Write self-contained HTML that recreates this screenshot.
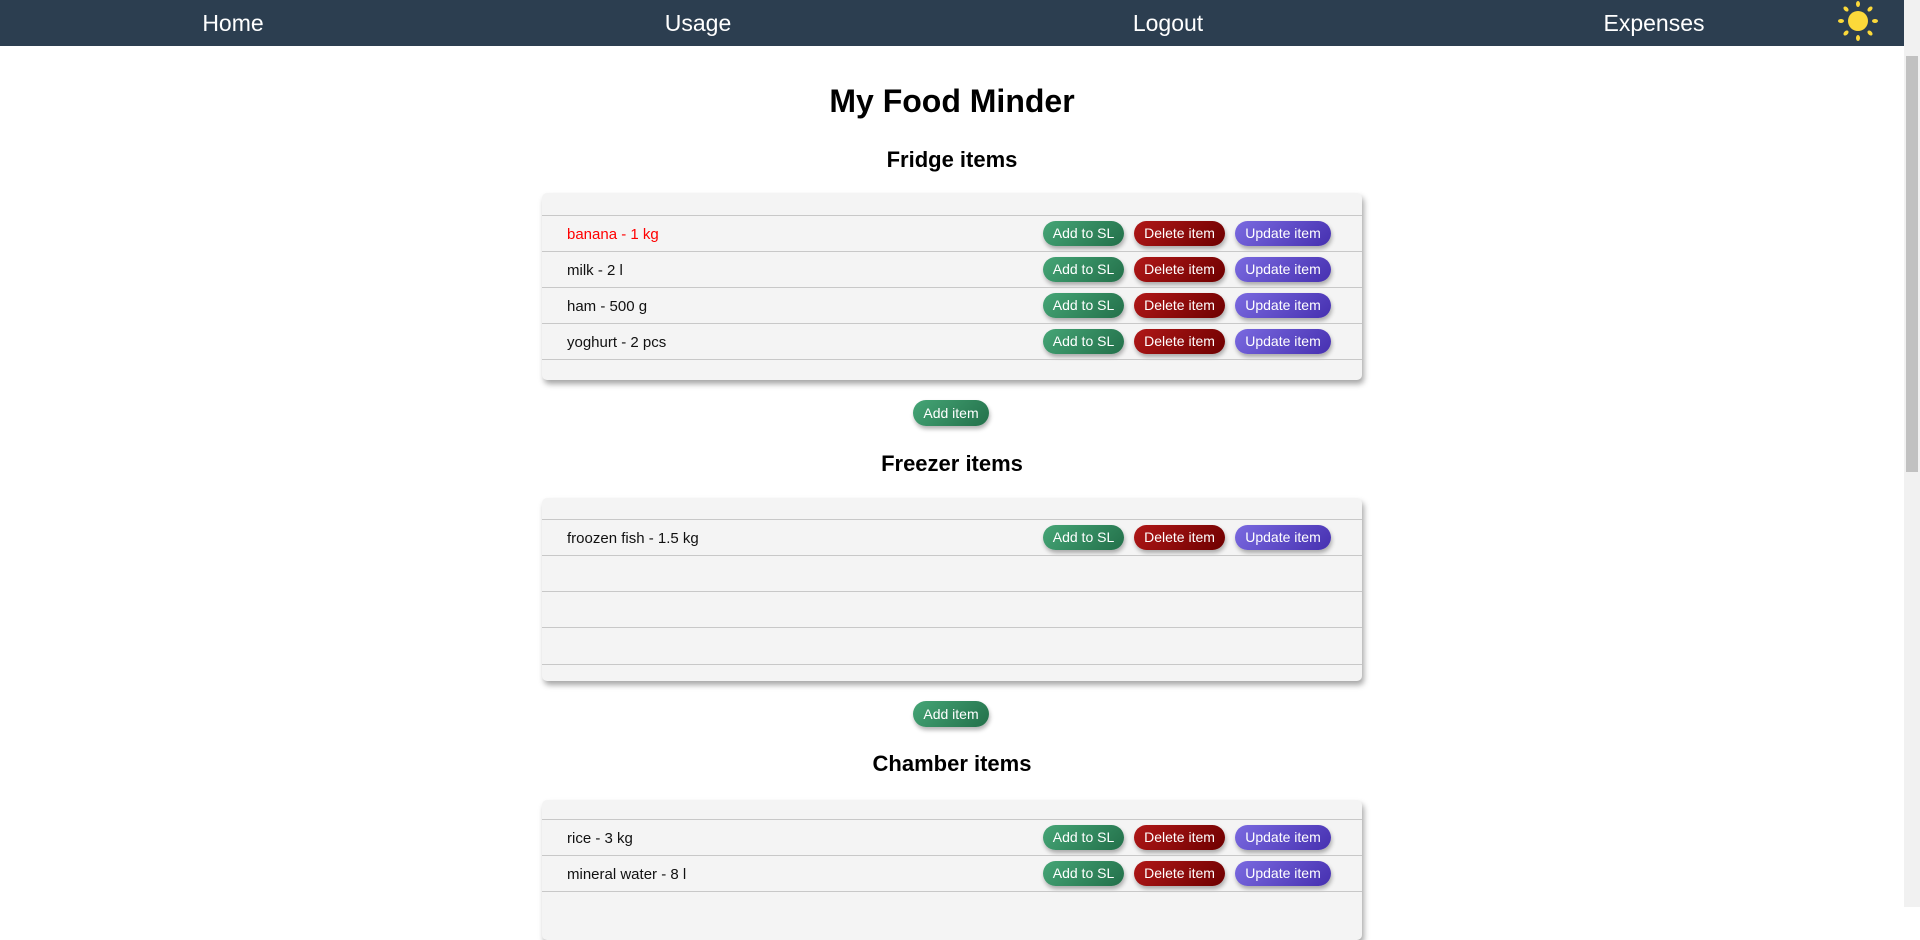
<!DOCTYPE html>
<html><head><meta charset="utf-8"><style>
*{margin:0;padding:0;box-sizing:border-box}
body{width:1920px;height:907px;overflow:hidden;background:#fff;font-family:"Liberation Sans",Arial,sans-serif;position:relative}
.nav{position:absolute;left:0;top:0;width:1904px;height:46px;background:#2c3e50}
.nav span{position:absolute;top:10px;color:#fff;font-size:23px;transform:translateX(-50%)}
.sb{position:absolute;right:0;top:0;width:16px;height:907px;background:#f1f1f1}
.sb .t{position:absolute;left:2px;top:56px;width:12px;height:416px;background:#c1c1c1}
h1,h2{position:absolute;left:0;width:1904px;text-align:center;font-weight:bold;color:#000}
h1{font-size:32px}
h2{font-size:22px}
.card{position:absolute;left:542px;width:820px;background:#f4f4f4;border-radius:5px;box-shadow:2px 4px 6px rgba(0,0,0,.35)}
.row{position:absolute;left:0;width:820px;height:36px;border-top:1px solid #c8c8c8}
.row .l{position:absolute;left:25px;top:10px;font-size:15px;color:#111}
.b{position:absolute;top:5px;height:25px;border-radius:13px;color:#fff;font-size:14px;text-align:center;line-height:25px;box-shadow:1px 3px 4px rgba(0,0,0,.3)}
.g{background:linear-gradient(135deg,#45a576,#23704a)}
.r{background:linear-gradient(135deg,#b01818,#6e0000)}
.p{background:linear-gradient(135deg,#7a6ae0,#4630b0)}
.add{position:absolute;left:913px;width:76px;height:26px;border-radius:13px;color:#fff;font-size:14px;text-align:center;line-height:26px;box-shadow:1px 3px 4px rgba(0,0,0,.3)}
</style></head><body>
<div class="nav">
<span style="left:233px">Home</span><span style="left:698px">Usage</span><span style="left:1168px">Logout</span><span style="left:1654px">Expenses</span>
<svg style="position:absolute;left:1836px;top:0" width="44" height="44" viewBox="0 0 44 44">
<circle cx="22" cy="21" r="10" fill="#fcd93a"/>
<g fill="#fcd93a">
<ellipse cx="22" cy="4" rx="2" ry="3"/><ellipse cx="22" cy="38" rx="2" ry="3"/>
<ellipse cx="5" cy="21" rx="3" ry="2"/><ellipse cx="39" cy="21" rx="3" ry="2"/>
<ellipse cx="10" cy="9" rx="2" ry="3" transform="rotate(-45 10 9)"/><ellipse cx="34" cy="9" rx="2" ry="3" transform="rotate(45 34 9)"/>
<ellipse cx="10" cy="33" rx="2" ry="3" transform="rotate(45 10 33)"/><ellipse cx="34" cy="33" rx="2" ry="3" transform="rotate(-45 34 33)"/>
</g></svg>
</div>
<div class="sb"><div class="t"></div></div>
<h1 style="top:83px">My Food Minder</h1>
<h2 style="top:147px">Fridge items</h2>
<div class="card" style="top:193px;height:187px">
<div class="row" style="top:22px"><span class="l" style="color:#f00">banana - 1 kg</span><div class="b g" style="left:501px;width:81px">Add to SL</div><div class="b r" style="left:592px;width:91px">Delete item</div><div class="b p" style="left:693px;width:96px">Update item</div></div>
<div class="row" style="top:58px"><span class="l">milk - 2 l</span><div class="b g" style="left:501px;width:81px">Add to SL</div><div class="b r" style="left:592px;width:91px">Delete item</div><div class="b p" style="left:693px;width:96px">Update item</div></div>
<div class="row" style="top:94px"><span class="l">ham - 500 g</span><div class="b g" style="left:501px;width:81px">Add to SL</div><div class="b r" style="left:592px;width:91px">Delete item</div><div class="b p" style="left:693px;width:96px">Update item</div></div>
<div class="row" style="top:130px"><span class="l">yoghurt - 2 pcs</span><div class="b g" style="left:501px;width:81px">Add to SL</div><div class="b r" style="left:592px;width:91px">Delete item</div><div class="b p" style="left:693px;width:96px">Update item</div></div>
<div class="row" style="top:166px;height:21px"></div>
</div>
<div class="add g" style="top:400px">Add item</div>
<h2 style="top:451px">Freezer items</h2>
<div class="card" style="top:498px;height:183px">
<div class="row" style="top:21px"><span class="l">froozen fish - 1.5 kg</span><div class="b g" style="left:501px;width:81px">Add to SL</div><div class="b r" style="left:592px;width:91px">Delete item</div><div class="b p" style="left:693px;width:96px">Update item</div></div>
<div class="row" style="top:57px"></div>
<div class="row" style="top:93px"></div>
<div class="row" style="top:129px"></div>
<div class="row" style="top:166px;height:17px"></div>
</div>
<div class="add g" style="top:701px">Add item</div>
<h2 style="top:751px">Chamber items</h2>
<div class="card" style="top:800px;height:140px">
<div class="row" style="top:19px"><span class="l">rice - 3 kg</span><div class="b g" style="left:501px;width:81px">Add to SL</div><div class="b r" style="left:592px;width:91px">Delete item</div><div class="b p" style="left:693px;width:96px">Update item</div></div>
<div class="row" style="top:55px"><span class="l">mineral water - 8 l</span><div class="b g" style="left:501px;width:81px">Add to SL</div><div class="b r" style="left:592px;width:91px">Delete item</div><div class="b p" style="left:693px;width:96px">Update item</div></div>
<div class="row" style="top:91px"></div>
</div>
</body></html>
